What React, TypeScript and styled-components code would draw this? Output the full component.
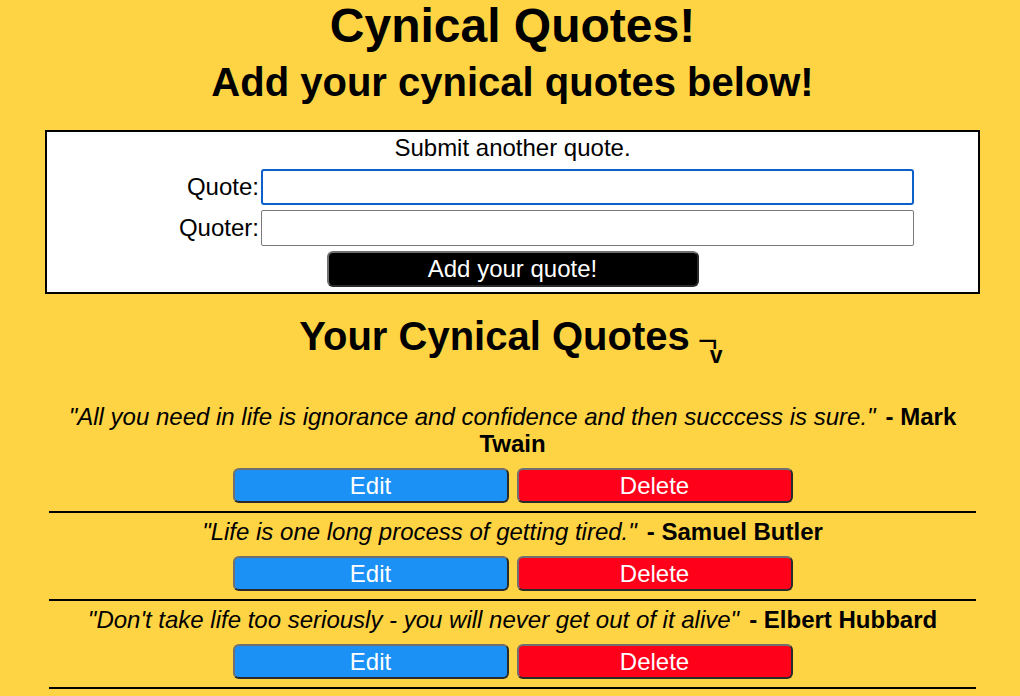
import React from "react";
import styled, { createGlobalStyle } from "styled-components";

const GlobalStyle = createGlobalStyle`
  html, body {
    margin: 0;
    padding: 0;
    background: #fed444;
  }
  body {
    font-family: "Liberation Sans", Arial, Helvetica, sans-serif;
    color: #000;
  }
`;

const Page = styled.div`
  padding: 0 8px 0 13px;
  text-align: center;
`;

const Title = styled.h1`
  margin: 0;
  font-size: 48px;
  line-height: 48px;
  padding-top: 2px;
  font-weight: 700;
`;

const Subtitle = styled.h2`
  margin: 9px 0 0;
  font-size: 40px;
  line-height: 46px;
  font-weight: 700;
`;

const FormBox = styled.form`
  margin: 25px 32px 0;
  background: #fff;
  border: 2px solid #000;
  padding: 2px 0 5px;
  display: flex;
  flex-direction: column;
  align-items: center;
`;

const FormTitle = styled.div`
  font-size: 24px;
  line-height: 28px;
  margin-bottom: 7px;
`;

const FieldGrid = styled.div`
  align-self: stretch;
  display: grid;
  grid-template-columns: 214px 653px;
  row-gap: 5px;
  align-items: center;
`;

const Label = styled.label`
  font-size: 24px;
  line-height: 28px;
  text-align: right;
  padding-right: 2px;
`;

const Input = styled.input<{ $focused?: boolean }>`
  box-sizing: border-box;
  width: 653px;
  height: 36px;
  margin: 0;
  font-size: 20px;
  font-family: inherit;
  background: #fff;
  border: ${(p) => (p.$focused ? "2px solid #0b61c9" : "1px solid #7a7a7a")};
  border-radius: ${(p) => (p.$focused ? "3px" : "2px")};
  outline: none;
  padding: 0 4px;
`;

const BaseButton = styled.button`
  box-sizing: border-box;
  height: 36px;
  margin: 0;
  font-family: "Liberation Sans", Arial, Helvetica, sans-serif;
  font-size: 24px;
  line-height: 30px;
  color: #fff;
  border-width: 2px;
  border-style: solid;
  border-color: #707070 #2a2a2a #2a2a2a #707070;
  border-radius: 6px;
  padding: 0;
  cursor: pointer;
`;

const SubmitButton = styled(BaseButton)`
  margin-top: 5px;
  width: 372px;
  background: #000;
`;

const ListHeading = styled.h2`
  margin: 19px 0 0;
  font-size: 40px;
  line-height: 46px;
  font-weight: 700;
`;

const Face = styled.span`
  display: inline-block;
  margin-left: 8px;
  position: relative;
  width: 28px;
  height: 30px;
  vertical-align: -8px;
`;

const FaceMark = styled.span`
  position: absolute;
  left: 0;
  top: -8px;
  font-size: 34px;
  line-height: 40px;
  font-weight: 400;
`;

const FaceV = styled.span`
  position: absolute;
  left: 12px;
  top: 13px;
  font-size: 23px;
  line-height: 28px;
  font-weight: 700;
`;

const QuoteList = styled.ul`
  list-style: none;
  margin: 39px 36px 0;
  padding: 0;
`;

const QuoteItem = styled.li`
  padding-top: 5px;
  padding-bottom: 8px;
  border-bottom: 2px solid #000;
`;

const QuoteText = styled.p`
  margin: 0;
  font-size: 24px;
  line-height: 27px;
`;

const Said = styled.em`
  font-style: italic;
  margin-right: 10px;
`;

const Author = styled.strong`
  font-weight: 700;
`;

const ActionRow = styled.div`
  display: flex;
  justify-content: center;
  gap: 8px;
  margin-top: 11px;
`;

const ActionButton = styled(BaseButton)<{ $variant: "edit" | "delete" }>`
  width: 276px;
  height: 35px;
  background: ${(p) => (p.$variant === "edit" ? "#1b91f5" : "#ff001b")};
`;

const quotes = [
  {
    text: "All you need in life is ignorance and confidence and then succcess is sure.",
    author: "Mark Twain",
  },
  { text: "Life is one long process of getting tired.", author: "Samuel Butler" },
  {
    text: "Don't take life too seriously - you will never get out of it alive",
    author: "Elbert Hubbard",
  },
];

export default function App() {
  return (
    <>
      <GlobalStyle />
      <Page>
        <Title>Cynical Quotes!</Title>
        <Subtitle>Add your cynical quotes below!</Subtitle>
        <FormBox onSubmit={(e) => e.preventDefault()}>
          <FormTitle>Submit another quote.</FormTitle>
          <FieldGrid>
            <Label htmlFor="quote">Quote:</Label>
            <Input id="quote" $focused />
            <Label htmlFor="quoter">Quoter:</Label>
            <Input id="quoter" />
          </FieldGrid>
          <SubmitButton type="submit">Add your quote!</SubmitButton>
        </FormBox>
        <ListHeading>
          Your Cynical Quotes
          <Face>
            <FaceMark>¬</FaceMark>
            <FaceV>v</FaceV>
          </Face>
        </ListHeading>
        <QuoteList>
          {quotes.map((q) => (
            <QuoteItem key={q.author}>
              <QuoteText>
                <Said>"{q.text}"</Said>
                <Author>- {q.author}</Author>
              </QuoteText>
              <ActionRow>
                <ActionButton $variant="edit">Edit</ActionButton>
                <ActionButton $variant="delete">Delete</ActionButton>
              </ActionRow>
            </QuoteItem>
          ))}
        </QuoteList>
      </Page>
    </>
  );
}
